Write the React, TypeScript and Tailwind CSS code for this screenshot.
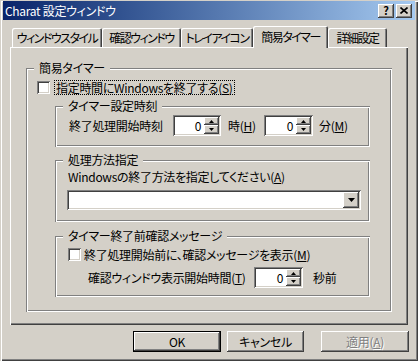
const raised =
  "shadow-[inset_-1px_-1px_#404040,inset_1px_1px_#ffffff,inset_-2px_-2px_#808080]";
const sunken =
  "shadow-[inset_1px_1px_#808080,inset_-1px_-1px_#ffffff,inset_2px_2px_#404040,inset_-2px_-2px_#d4d0c8]";
const etched =
  "shadow-[inset_1px_1px_#808080,inset_-1px_-1px_#ffffff,inset_2px_2px_#ffffff,inset_-2px_-2px_#808080]";

function U({ children }: { children: string }) {
  return <span className="underline underline-offset-[1px]">{children}</span>;
}

function Group({
  label,
  className,
  children,
}: {
  label: string;
  className: string;
  children?: React.ReactNode;
}) {
  return (
    <div className={`relative ${etched} ${className}`}>
      <span className="absolute -top-[7px] left-[8px] bg-[#d4d0c8] px-[5px] leading-[14px]">
        {label}
      </span>
      {children}
    </div>
  );
}

function Check() {
  return <div className={`h-[13px] w-[13px] shrink-0 bg-white ${sunken}`} />;
}

function Arrow({ up }: { up?: boolean }) {
  return (
    <svg width="5" height="3" viewBox="0 0 5 3">
      <path d={up ? "M2.5 0 L5 3 L0 3 Z" : "M0 0 L5 0 L2.5 3 Z"} fill="#000" />
    </svg>
  );
}

function Spin({ w }: { w: string }) {
  return (
    <div className={`flex h-[21px] ${w} shrink-0 bg-white p-[2px] ${sunken}`}>
      <div className="flex-1 pr-[3px] text-right leading-[17px]">0</div>
      <div className="flex w-[15px] flex-col">
        <div className={`flex h-[8px] items-center justify-center bg-[#d4d0c8] ${raised}`}>
          <Arrow up />
        </div>
        <div className={`flex h-[9px] items-center justify-center bg-[#d4d0c8] ${raised}`}>
          <Arrow />
        </div>
      </div>
    </div>
  );
}

function Tab({ label, w, active }: { label: string; w: string; active?: boolean }) {
  return (
    <div
      className={`flex ${w} items-center justify-center whitespace-nowrap rounded-t-[2px] bg-[#d4d0c8] tracking-[-1.5px] shadow-[inset_1px_1px_#ffffff,inset_-1px_0_#404040,inset_-2px_0_#808080] ${
        active ? "relative z-10 h-[22px] pb-[1px]" : "mt-[2px] h-[19px]"
      }`}
    >
      {label}
    </div>
  );
}

export default function App() {
  return (
    <div
      className="flex h-[361px] w-[418px] flex-col overflow-hidden bg-[#d4d0c8] px-[3px] pt-[1px] text-[12px] leading-[14px] tracking-[-0.3px] text-black shadow-[inset_1px_1px_#d4d0c8,inset_2px_2px_#ffffff,inset_-1px_-1px_#404040,inset_-2px_-2px_#808080] [font-feature-settings:'palt']"
      style={{ fontFamily: '"Noto Sans CJK JP", "Noto Sans", sans-serif' }}
    >
      {/* title bar */}
      <div className="flex h-[19px] shrink-0 items-center bg-linear-to-r from-[#0a246a] to-[#a6caf0] pl-[2px] pr-[3px]">
        <span className="flex-1 text-[12px] text-white">Charat 設定ウィンドウ</span>
        <div className={`flex h-[14px] w-[16px] items-center justify-center bg-[#d4d0c8] ${raised}`}>
          <span className="text-[11px] font-bold leading-none">?</span>
        </div>
        <div className={`ml-[2px] flex h-[14px] w-[16px] items-center justify-center bg-[#d4d0c8] ${raised}`}>
          <svg width="8" height="7" viewBox="0 0 8 7">
            <path d="M0.5 0.5 L7.5 6.5 M7.5 0.5 L0.5 6.5" stroke="#000" strokeWidth="1.6" />
          </svg>
        </div>
      </div>

      {/* tabs */}
      <div className="ml-[9px] mt-[6px] flex h-[21px] items-start">
        <Tab label="ウィンドウスタイル" w="w-[90px]" />
        <Tab label="確認ウィンドウ" w="w-[79px]" />
        <Tab label="トレイアイコン" w="w-[72px]" />
        <Tab label="簡易タイマー" w="w-[75px]" active />
        <Tab label="詳細設定" w="w-[59px]" />
      </div>

      {/* panel */}
      <div className="mx-[7px] h-[278px] bg-[#d4d0c8] pl-[16px] pt-[21px] shadow-[inset_1px_1px_#ffffff,inset_-1px_-1px_#404040,inset_-2px_-2px_#808080]">
        <Group label="簡易タイマー" className="flex h-[244px] w-[366px] flex-col pt-[13px]">
          <div className="flex h-[13px] items-center pl-[11px]">
            <Check />
            <span className="ml-[4px] border border-dotted border-black px-[1px] leading-[13px]">
              指定時間にWindowsを終了する(<U>S</U>)
            </span>
          </div>

          <Group label="タイマー設定時刻" className="ml-[29px] mt-[12px] h-[41px] w-[315px] pl-[14px] pt-[9px]">
            <div className="flex items-center">
              <span className="w-[104px]">終了処理開始時刻</span>
              <Spin w="w-[48px]" />
              <span className="ml-[7px] w-[36px]">
                時(<U>H</U>)
              </span>
              <Spin w="w-[49px]" />
              <span className="ml-[6px]">
                分(<U>M</U>)
              </span>
            </div>
          </Group>

          <Group label="処理方法指定" className="ml-[29px] mt-[13px] h-[62px] w-[315px] pl-[12px] pt-[10px]">
            <div className="pl-[1px]">
              Windowsの終了方法を指定してください(<U>A</U>)
            </div>
            <div className={`mt-[6px] flex h-[20px] w-[294px] justify-end bg-white p-[2px] ${sunken}`}>
              <div className={`flex w-[16px] items-center justify-center bg-[#d4d0c8] ${raised}`}>
                <svg width="7" height="4" viewBox="0 0 7 4">
                  <path d="M0 0 L7 0 L3.5 4 Z" fill="#000" />
                </svg>
              </div>
            </div>
          </Group>

          <Group
            label="タイマー終了前確認メッセージ"
            className="ml-[29px] mt-[14px] h-[61px] w-[315px] pl-[13px] pt-[12px]"
          >
            <div className="flex h-[13px] items-center">
              <Check />
              <span className="ml-[3px]">
                終了処理開始前に、確認メッセージを表示(<U>M</U>)
              </span>
            </div>
            <div className="mt-[6px] flex items-center pl-[20px]">
              <span className="w-[166px]">
                確認ウィンドウ表示開始時間(<U>T</U>)
              </span>
              <Spin w="w-[49px]" />
              <span className="ml-[10px]">秒前</span>
            </div>
          </Group>
        </Group>
      </div>

      {/* buttons */}
      <div className="mr-[6px] mt-[6px] flex justify-end">
        <div className="h-[21px] w-[88px] border border-black">
          <div className={`flex h-full items-center justify-center ${raised}`}>OK</div>
        </div>
        <div className={`ml-[6px] flex h-[21px] w-[77px] items-center justify-center ${raised}`}>
          キャンセル
        </div>
        <div
          className={`ml-[17px] flex h-[21px] w-[88px] items-center justify-center text-[#808080] [text-shadow:1px_1px_#ffffff] ${raised}`}
        >
          適用(<U>A</U>)
        </div>
      </div>
    </div>
  );
}
